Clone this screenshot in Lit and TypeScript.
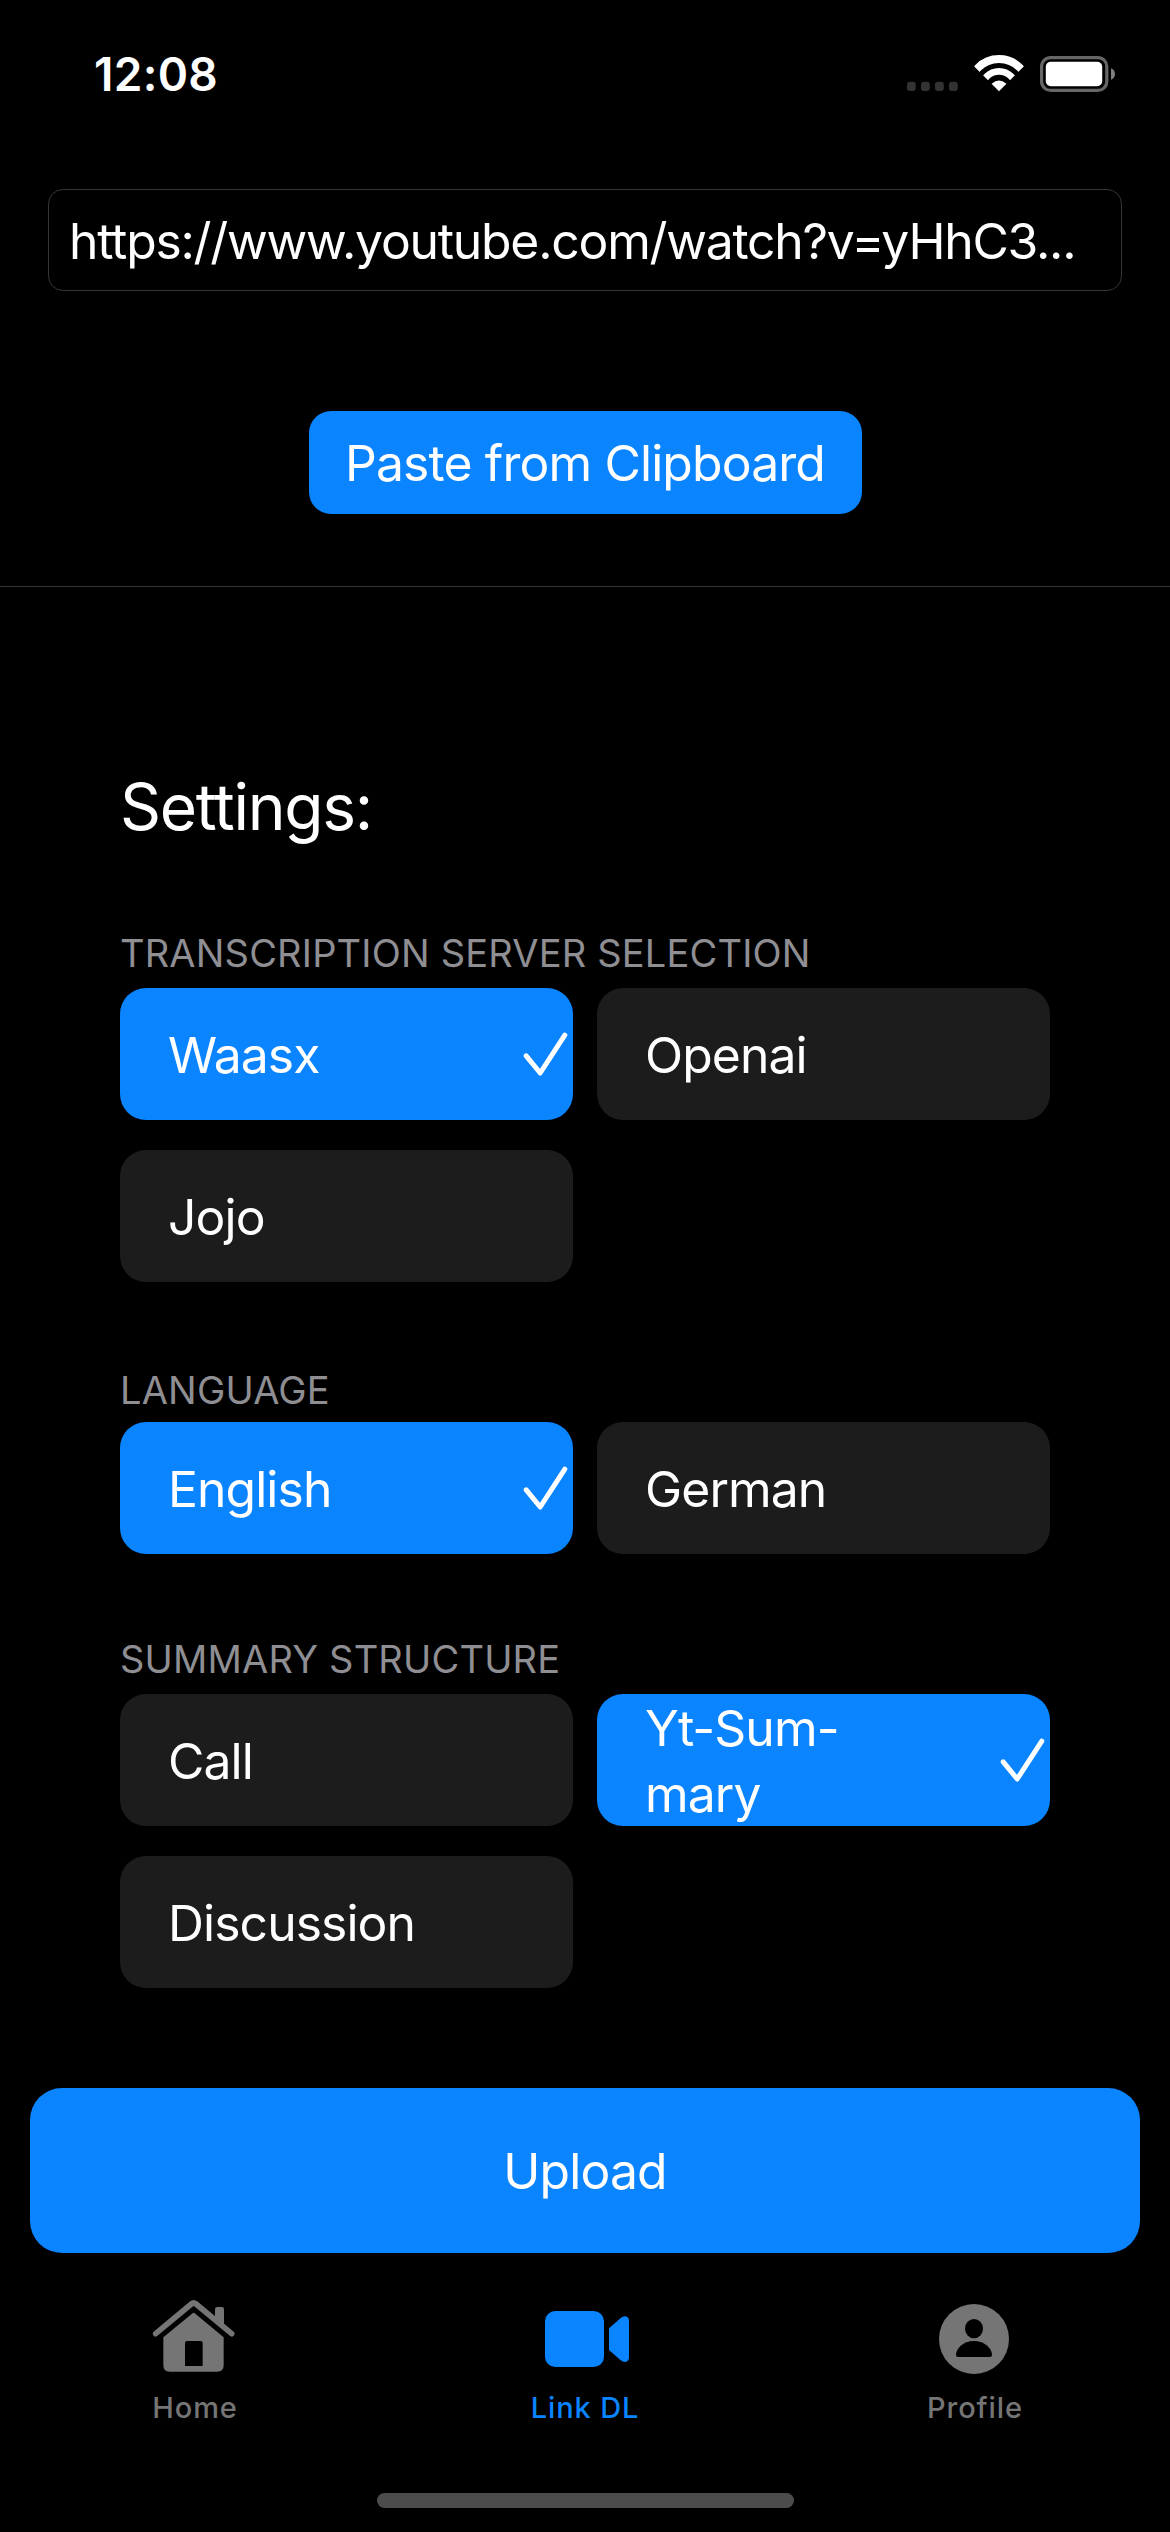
import { LitElement, html, css, svg, nothing, TemplateResult } from "lit";
import { customElement, property, state } from "lit/decorators.js";
import { classMap } from "lit/directives/class-map.js";

interface Option {
  id: string;
  lines: string[];
}

interface Group {
  key: string;
  title: string;
  options: Option[];
}

const GROUPS: Group[] = [
  {
    key: "server",
    title: "TRANSCRIPTION SERVER SELECTION",
    options: [
      { id: "waasx", lines: ["Waasx"] },
      { id: "openai", lines: ["Openai"] },
      { id: "jojo", lines: ["Jojo"] },
    ],
  },
  {
    key: "language",
    title: "LANGUAGE",
    options: [
      { id: "english", lines: ["English"] },
      { id: "german", lines: ["German"] },
    ],
  },
  {
    key: "structure",
    title: "SUMMARY STRUCTURE",
    options: [
      { id: "call", lines: ["Call"] },
      { id: "yt-summary", lines: ["Yt-Sum-", "mary"] },
      { id: "discussion", lines: ["Discussion"] },
    ],
  },
];

@customElement("status-bar")
class StatusBar extends LitElement {
  static styles = css`
    :host {
      display: flex;
      justify-content: space-between;
      height: 189px;
      box-sizing: border-box;
      padding: 50px 51px 0 94px;
    }
    .time {
      font-size: 46px;
      font-weight: 600;
      line-height: 49px;
      letter-spacing: 0.3px;
    }
    .indicators {
      display: block;
      width: 214px;
      height: 46px;
    }
  `;

  render() {
    return html`
      <span class="time">12:08</span>
      <svg class="indicators" viewBox="905 50 214 46">
        <defs>
          <clipPath id="fan"><path d="M999 91.3 L964 56.3 V45 H1034 V56.3 Z" /></clipPath>
        </defs>
        <g fill="#333">
          ${[907, 921, 935, 949].map(
            (x) => svg`<rect x=${x} y="81.8" width="8.8" height="9.2" rx="3" />`
          )}
        </g>
        <g clip-path="url(#fan)" fill="none" stroke="#fff">
          <circle cx="999" cy="88.6" r="29.6" stroke-width="7.8" />
          <circle cx="999" cy="88.6" r="17.2" stroke-width="6.8" />
          <circle cx="999" cy="90" r="9.4" fill="#fff" stroke="none" />
        </g>
        <rect x="1041.6" y="57.6" width="65.2" height="32.8" rx="9" fill="none" stroke="#666" stroke-width="3.2" />
        <rect x="1045.8" y="61.8" width="56.4" height="24.4" rx="5" fill="#fff" />
        <path d="M1111 68.3 C1116.3 70 1116.3 78 1111 79.7 Z" fill="#808080" />
      </svg>
    `;
  }
}

@customElement("option-chip")
class OptionChip extends LitElement {
  @property({ attribute: false }) lines: string[] = [];
  @property({ type: Boolean }) selected = false;

  static styles = css`
    :host {
      display: block;
    }
    .chip {
      display: flex;
      align-items: center;
      justify-content: space-between;
      height: 132px;
      box-sizing: border-box;
      padding: 0 4px 0 48px;
      border-radius: 26px;
      background: #1c1c1c;
      color: #fff;
      cursor: pointer;
    }
    .chip.selected {
      background: #0a84ff;
    }
    .label {
      display: flex;
      flex-direction: column;
      padding-top: 1px;
      font-size: 49.8px;
      line-height: 66px;
      letter-spacing: -0.9px;
      white-space: nowrap;
    }
    .check {
      display: block;
      width: 46px;
      height: 46px;
      fill: none;
      stroke: #fff;
      stroke-width: 5;
      stroke-linecap: round;
      stroke-linejoin: round;
    }
  `;

  render() {
    return html`
      <div class=${classMap({ chip: true, selected: this.selected })}>
        <div class="label">${this.lines.map((line) => html`<span>${line}</span>`)}</div>
        ${this.selected
          ? html`<svg class="check" viewBox="0 0 46 46"><path d="M3.2 24.8 L17.2 42 L41.8 4.2" /></svg>`
          : nothing}
      </div>
    `;
  }
}

const HOME_ICON = html`
  <svg class="icon" viewBox="60 54 270 228">
    <path d="M255 122 V88 Q255 81 262 81 H275 Q282 81 282 88 V142 Z" fill="currentColor" />
    <path
      d="M77 161 L184 72 Q191 66 198 72 L305 161"
      fill="none"
      stroke="currentColor"
      stroke-width="17"
      stroke-linecap="round"
    />
    <path
      fill="currentColor"
      fill-rule="evenodd"
      d="M186 101 Q191 96 196 101 L281 172 V256 Q281 275 262 275 H119 Q100 275 100 256 V172 Z
         M171 183 Q165 183 165 189 V258 H218 V189 Q218 183 212 183 Z"
    />
  </svg>
`;

const VIDEO_ICON = html`
  <svg class="icon" viewBox="90 54 270 228">
    <rect x="105" y="93" width="177" height="168" rx="31" fill="currentColor" />
    <path
      fill="currentColor"
      d="M297 145 L332 114 Q338 109 345 109 Q357 110 357 123 V232 Q357 245 345 246 Q338 246 332 241 L297 210 Z"
    />
  </svg>
`;

const PROFILE_ICON = html`
  <svg class="icon" viewBox="90 54 270 228">
    <circle cx="222" cy="177" r="105" fill="currentColor" />
    <ellipse cx="222" cy="146" rx="27" ry="29" fill="#000" />
    <path d="M168 225 C168 205 190 183 222 183 C254 183 276 205 276 225 Q276 231 270 231 H174 Q168 231 168 225 Z" fill="#000" />
  </svg>
`;

interface Tab {
  id: string;
  label: string;
  icon: TemplateResult;
}

const TABS: Tab[] = [
  { id: "home", label: "Home", icon: HOME_ICON },
  { id: "link", label: "Link DL", icon: VIDEO_ICON },
  { id: "profile", label: "Profile", icon: PROFILE_ICON },
];

@customElement("tab-bar")
class TabBar extends LitElement {
  @state() private active = "link";

  static styles = css`
    :host {
      display: grid;
      grid-template-columns: repeat(3, 1fr);
      padding-top: 45px;
      height: 195px;
    }
    .tab {
      display: flex;
      flex-direction: column;
      align-items: center;
      gap: 16px;
      color: #757575;
      cursor: pointer;
    }
    .tab.active {
      color: #0a84ff;
    }
    .icon {
      display: block;
      width: 90px;
      height: 76px;
    }
    .label {
      font-size: 29px;
      font-weight: 500;
      line-height: 36px;
      letter-spacing: 0.9px;
    }
  `;

  render() {
    return TABS.map(
      (tab) => html`
        <div
          class=${classMap({ tab: true, active: tab.id === this.active })}
          @click=${() => (this.active = tab.id)}
        >
          ${tab.icon}
          <span class="label">${tab.label}</span>
        </div>
      `
    );
  }
}

@customElement("app-root")
class AppRoot extends LitElement {
  @state() private picked: Record<string, string> = {
    server: "waasx",
    language: "english",
    structure: "yt-summary",
  };

  static styles = css`
    :host {
      display: flex;
      flex-direction: column;
      width: 1170px;
      height: 2532px;
      overflow: hidden;
      background: #000;
      color: #fff;
      font-family: Inter, "Liberation Sans", sans-serif;
    }
    .link-area {
      display: flex;
      flex-direction: column;
      align-items: center;
      gap: 120px;
      height: 398px;
      box-sizing: border-box;
      border-bottom: 1px solid #363636;
    }
    .url {
      width: 1074px;
      height: 102px;
      box-sizing: border-box;
      padding: 1px 20px 0;
      border: 1px solid #363636;
      border-radius: 15px;
      font-size: 49.8px;
      line-height: 100px;
      letter-spacing: -1.22px;
      white-space: nowrap;
    }
    .paste {
      width: 553px;
      height: 103px;
      border-radius: 22px;
      background: #0a84ff;
      font-size: 49.8px;
      line-height: 104px;
      letter-spacing: -0.85px;
      text-align: center;
    }
    .settings {
      display: flex;
      flex-direction: column;
      height: 1501px;
      box-sizing: border-box;
      padding: 180px 120px 0;
    }
    .title {
      margin: 0 0 83px;
      font-size: 64px;
      font-weight: 400;
      line-height: 80px;
      letter-spacing: -1.3px;
    }
    .group {
      margin-bottom: 82px;
    }
    .group.server {
      margin-bottom: 85px;
    }
    .caption {
      margin: 0 0 12px;
      color: #8e8e93;
      font-size: 38px;
      font-weight: 400;
      line-height: 46px;
      letter-spacing: 0.19px;
    }
    .language .caption {
      margin-bottom: 9px;
    }
    .options {
      display: grid;
      grid-template-columns: 1fr 1fr;
      gap: 30px 24px;
    }
    .upload {
      height: 165px;
      margin: 0 30px;
      border-radius: 32px;
      background: #0a84ff;
      font-size: 49.8px;
      line-height: 166px;
      letter-spacing: -0.8px;
      text-align: center;
    }
    .home-indicator {
      width: 417px;
      height: 15px;
      margin: 0 auto;
      border-radius: 8px;
      background: #4c4c4c;
    }
  `;

  private pick(group: string, id: string) {
    this.picked = { ...this.picked, [group]: id };
  }

  render() {
    return html`
      <status-bar></status-bar>
      <div class="link-area">
        <div class="url">https://www.youtube.com/watch?v=yHhC3...</div>
        <div class="paste">Paste from Clipboard</div>
      </div>
      <div class="settings">
        <h1 class="title">Settings:</h1>
        ${GROUPS.map(
          (group) => html`
            <section class=${`group ${group.key}`}>
              <h2 class="caption">${group.title}</h2>
              <div class="options">
                ${group.options.map(
                  (option) => html`
                    <option-chip
                      .lines=${option.lines}
                      ?selected=${this.picked[group.key] === option.id}
                      @click=${() => this.pick(group.key, option.id)}
                    ></option-chip>
                  `
                )}
              </div>
            </section>
          `
        )}
      </div>
      <div class="upload">Upload</div>
      <tab-bar></tab-bar>
      <div class="home-indicator"></div>
    `;
  }
}
